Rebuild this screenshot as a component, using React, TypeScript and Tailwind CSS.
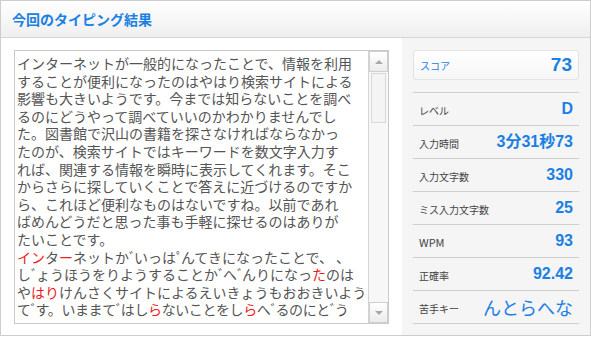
import clsx from "clsx";

const lines = [
  "インターネットが一般的になったことで、情報を利用",
  "することが便利になったのはやはり検索サイトによる",
  "影響も大きいようです。今までは知らないことを調べ",
  "るのにどうやって調べていいのかわかりませんでし",
  "た。図書館で沢山の書籍を探さなければならなかっ",
  "たのが、検索サイトではキーワードを数文字入力す",
  "れば、関連する情報を瞬時に表示してくれます。そこ",
  "からさらに探していくことで答えに近づけるのですか",
  "ら、これほど便利なものはないですね。以前であれ",
  "ばめんどうだと思った事も手軽に探せるのはありが",
  "たいことです。",
  "[イン]タ[ー]ネットかﾞいっはﾟんてきになったことで、 、",
  "しﾞょうほうをりようすることかﾞへﾞんりになっ[た]のは",
  "や[はり]けんさくサイトによるえいきょうもおおきいよう",
  "てﾞす。いままてﾞはし[ら]ないことをし[ら]へﾞるのにとﾞう",
];

const stats = [
  { label: "レベル", value: "D" },
  { label: "入力時間", value: "3分31秒73" },
  { label: "入力文字数", value: "330" },
  { label: "ミス入力文字数", value: "25" },
  { label: "WPM", value: "93" },
  { label: "正確率", value: "92.42" },
  { label: "苦手キー", value: "んとらへな", weak: true },
];

// split a line into runs: plain text, red text ([...]) and narrow voiced marks
function TextLine({ text, tight }: { text: string; tight?: boolean }) {
  const parts: React.ReactNode[] = [];
  let red = false;
  let buf = "";
  const flush = () => {
    if (!buf) return;
    parts.push(
      red ? (
        <span key={parts.length} className="text-[#ee1c1c]">
          {buf}
        </span>
      ) : (
        buf
      )
    );
    buf = "";
  };
  for (const ch of text) {
    if (ch === "[") { flush(); red = true; continue; }
    if (ch === "]") { flush(); red = false; continue; }
    if (ch === "ﾞ" || ch === "ﾟ") {
      flush();
      parts.push(
        <span key={parts.length} className="tracking-[-2px]">
          {ch}
        </span>
      );
      continue;
    }
    buf += ch;
  }
  flush();
  return (
    <div className={clsx("whitespace-pre", tight && "tracking-[-0.4px]")}>{parts}</div>
  );
}

function ScrollArrow({ up }: { up?: boolean }) {
  return (
    <div className="flex h-[21px] items-center justify-center border border-[#cfcfcf] bg-gradient-to-b from-white to-[#ececec]">
      <div
        className={clsx(
          "h-0 w-0 border-x-[4px] border-x-transparent",
          up ? "border-b-[4px] border-b-[#a8a8a8]" : "border-t-[4px] border-t-[#a8a8a8]"
        )}
      />
    </div>
  );
}

export default function App() {
  return (
    <div className="h-[336px] w-[591px] border border-[#cdcdcd] bg-white font-['Noto_Sans_CJK_JP',sans-serif]">
      <div className="flex h-[37px] items-center border-b border-[#d6d6d6] bg-gradient-to-b from-white to-[#efefef] pl-[11px]">
        <h1 className="text-[14px] font-bold text-[#1b80e4]">今回のタイピング結果</h1>
      </div>

      <div className="flex h-[297px]">
        <div className="flex-1 px-[13px] pt-[12px]">
          <div className="flex h-[274px] border border-[#c9c9c9]">
            <div className="flex-1 overflow-hidden pl-[2px] pt-[4px] text-[14px] leading-[17.6px] text-[#555]">
              {lines.map((l, i) => (
                <TextLine key={i} text={l} tight={i === lines.length - 1} />
              ))}
            </div>
            <div className="flex w-[20px] flex-col border-l border-[#d4d4d4] bg-[#f7f7f7]">
              <ScrollArrow up />
              <div className="flex-1 px-[2px] pt-[1px]">
                <div className="h-[50px] border border-[#d9d9d9] bg-[#f4f4f4]" />
              </div>
              <ScrollArrow />
            </div>
          </div>
        </div>

        <div className="w-[188px] bg-[#f5f5f5] px-[11px] pt-[12px]">
          <div className="flex h-[30px] items-center justify-between rounded-[3px] border border-[#e2e2e2] bg-gradient-to-b from-white to-[#f6f6f6] px-[6px]">
            <span className="text-[10px] text-[#1b80e4]">スコア</span>
            <span className="font-['Liberation_Sans','Noto_Sans_CJK_JP',sans-serif] text-[19px] font-bold text-[#1b80e4]">
              73
            </span>
          </div>

          <div className="mt-[12px] border-b border-[#cfcfcf]">
            {stats.map((s) => (
              <div
                key={s.label}
                className="flex h-[33px] items-center justify-between border-t border-[#cfcfcf] px-[6px]"
              >
                <span
                  className={clsx(
                    "pt-[2px] text-[#444]",
                    s.label === "WPM" ? "text-[11px]" : "text-[10px]"
                  )}
                >
                  {s.label}
                </span>
                {s.weak ? (
                  <span className="text-[18px] text-[#1b80e4]">{s.value}</span>
                ) : (
                  <span className="font-['Liberation_Sans','Noto_Sans_CJK_JP',sans-serif] text-[16px] font-bold text-[#1b80e4]">
                    {s.value}
                  </span>
                )}
              </div>
            ))}
          </div>
        </div>
      </div>
    </div>
  );
}
